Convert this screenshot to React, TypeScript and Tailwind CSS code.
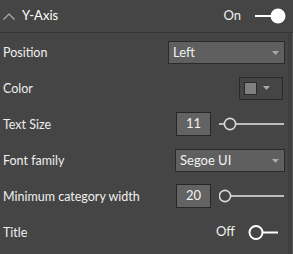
import React from "react";

const font = { fontFamily: '"Segoe UI", Lato, "Noto Sans", sans-serif' };

function Caret({ className = "" }: { className?: string }) {
  return (
    <svg width="7" height="4" viewBox="0 0 7 4" className={className}>
      <polygon points="0,0 7,0 3.5,4" fill="#a9a9a9" />
    </svg>
  );
}

function Dropdown({ value, w }: { value: string; w: string }) {
  return (
    <div
      className={`${w} h-[23px] border border-[#2a2a2a] bg-[#5f5f5f] flex items-center justify-between pl-[4px] pr-[5px]`}
    >
      <span className="text-[13px] text-[#f2f2f2] leading-none">{value}</span>
      <Caret className="mt-[1px]" />
    </div>
  );
}

function Slider({ pos }: { pos: number }) {
  return (
    <svg width="66" height="14" viewBox="0 0 66 14">
      <line x1={pos > 6 ? 0 : pos + 6} y1="7" x2="65" y2="7" stroke="#e6e6e6" strokeWidth="1.3" />
      <circle cx={pos} cy="7" r="5.6" fill="#454545" stroke="#d9d9d9" strokeWidth="1.6" />
    </svg>
  );
}

function NumBox({ value }: { value: string }) {
  return (
    <div className="w-[35px] h-[24px] border border-[#272727] bg-[#636363] flex items-center justify-center text-[13px] text-[#f2f2f2]">
      {value}
    </div>
  );
}

function Row({ label, children, pr = "pr-[3px]" }: { label: string; children?: React.ReactNode; pr?: string }) {
  return (
    <div className={`h-[36px] flex items-center justify-between pl-[3px] ${pr}`}>
      <span className="text-[12.5px] text-[#efefef] leading-none pt-[2px]">{label}</span>
      {children}
    </div>
  );
}

export default function App() {
  return (
    <div className="w-[293px] h-[254px] bg-[#454545] flex overflow-hidden" style={font}>
      <div className="flex-1 flex flex-col">
        <div className="h-[33px] border-b border-[#353535] flex items-center justify-between pl-[3px] pr-[2px]">
          <div className="flex items-center gap-[7px]">
            <svg width="12" height="7" viewBox="0 0 12 7">
              <polyline points="0.5,6.5 6,1 11.5,6.5" fill="none" stroke="#b5b5b5" strokeWidth="1.1" />
            </svg>
            <span className="text-[13px] text-white">Y-Axis</span>
          </div>
          <div className="flex items-center gap-[14px]">
            <span className="text-[13px] text-[#f0f0f0]">On</span>
            <svg width="31" height="16" viewBox="0 0 31 16">
              <line x1="0" y1="8" x2="18" y2="8" stroke="#ffffff" strokeWidth="2" />
              <circle cx="23" cy="8" r="7.5" fill="#ffffff" />
            </svg>
          </div>
        </div>

        <div className="flex flex-col pt-[1px]">
          <Row label="Position">
            <Dropdown value="Left" w="w-[117px]" />
          </Row>

          <Row label="Color" pr="pr-[5px]">
            <div className="w-[44px] h-[23px] border border-[#2a2a2a] flex items-center pl-[4px] gap-[6px]">
              <div className="w-[13px] h-[13px] border border-[#2a2a2a] bg-[#808080]" />
              <Caret />
            </div>
          </Row>

          <Row label="Text Size">
            <div className="flex items-center gap-[8px]">
              <NumBox value="11" />
              <Slider pos={11} />
            </div>
          </Row>

          <Row label="Font family">
            <Dropdown value="Segoe UI" w="w-[110px]" />
          </Row>

          <Row label="Minimum category width">
            <div className="flex items-center gap-[8px]">
              <NumBox value="20" />
              <Slider pos={6} />
            </div>
          </Row>

          <Row label="Title" pr="pr-[9px]">
            <div className="flex items-center gap-[13px]">
              <span className="text-[13px] text-[#f0f0f0]">Off</span>
              <svg width="31" height="17" viewBox="0 0 31 17">
                <circle cx="8" cy="8.5" r="6.5" fill="none" stroke="#ffffff" strokeWidth="2" />
                <line x1="14.5" y1="8.5" x2="30" y2="8.5" stroke="#ffffff" strokeWidth="2" />
              </svg>
            </div>
          </Row>
        </div>
      </div>
      <div className="w-[5px] flex flex-col">
        <div className="h-[33px] border-b border-[#353535]" />
        <div className="flex-1 bg-[#3f3f3f] border-r border-[#555555]" />
      </div>
    </div>
  );
}
